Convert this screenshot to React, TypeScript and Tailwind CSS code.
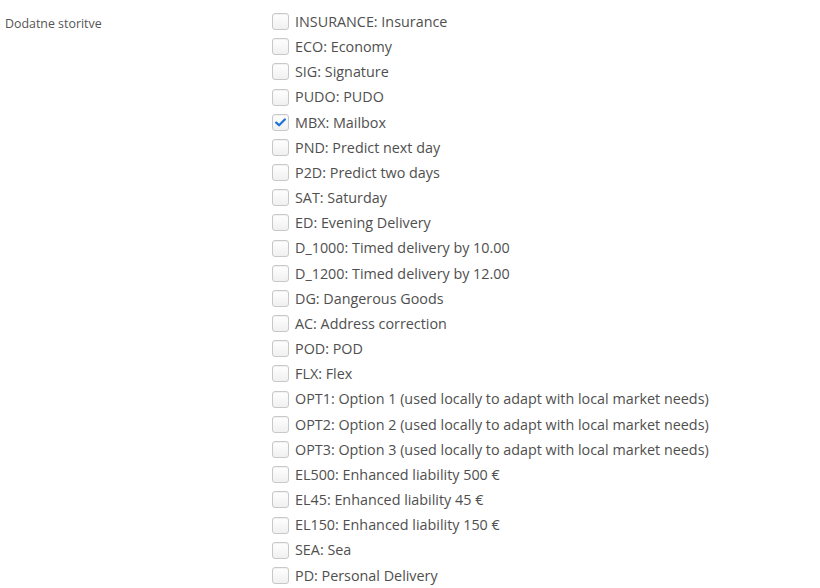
import { useState } from 'react'

const services = [
    ['INSURANCE', 'Insurance'],
    ['ECO', 'Economy'],
    ['SIG', 'Signature'],
    ['PUDO', 'PUDO'],
    ['MBX', 'Mailbox'],
    ['PND', 'Predict next day'],
    ['P2D', 'Predict two days'],
    ['SAT', 'Saturday'],
    ['ED', 'Evening Delivery'],
    ['D_1000', 'Timed delivery by 10.00'],
    ['D_1200', 'Timed delivery by 12.00'],
    ['DG', 'Dangerous Goods'],
    ['AC', 'Address correction'],
    ['POD', 'POD'],
    ['FLX', 'Flex'],
    ['OPT1', 'Option 1 (used locally to adapt with local market needs)'],
    ['OPT2', 'Option 2 (used locally to adapt with local market needs)'],
    ['OPT3', 'Option 3 (used locally to adapt with local market needs)'],
    ['EL500', 'Enhanced liability 500 €'],
    ['EL45', 'Enhanced liability 45 €'],
    ['EL150', 'Enhanced liability 150 €'],
    ['SEA', 'Sea'],
    ['PD', 'Personal Delivery'],
]

const Check = ({ on, toggle }: { on: boolean; toggle: () => void }) => (
    <button
        type="button"
        onClick={toggle}
        className="w-[17px] h-[17px] rounded-[3px] border border-[#c8c8c8] bg-gradient-to-b from-white to-[#f0f0f0] shadow-[inset_0_1px_1px_rgba(0,0,0,0.06)] flex items-center justify-center shrink-0"
    >
        {on && (
            <svg width="11" height="9" viewBox="0 0 11 9">
                <path d="M1.2 4.6 L4.1 7.3 L9.8 1.4" fill="none" stroke="#1b72d8" strokeWidth="2.2" strokeLinecap="round" strokeLinejoin="round" />
            </svg>
        )}
    </button>
)

export default function App() {
    const [checked, setChecked] = useState<Record<string, boolean>>({ MBX: true })
    return (
        <div className="w-[820px] h-[588px] bg-white overflow-hidden flex" style={{ fontFamily: '"Open Sans", sans-serif' }}>
            <div className="w-[272px] pl-[5px] pt-[15px] text-[12.4px] text-[#555]">Dodatne storitve</div>
            <div className="pt-[9px] flex flex-col">
                {services.map(([code, name]) => (
                    <label key={code} className="h-[25.2px] flex items-center gap-[6px] text-[14.35px] text-[#4f4f4f] cursor-pointer">
                        <Check on={!!checked[code]} toggle={() => setChecked((c) => ({ ...c, [code]: !c[code] }))} />
                        <span>{code}: {name}</span>
                    </label>
                ))}
            </div>
        </div>
    )
}
